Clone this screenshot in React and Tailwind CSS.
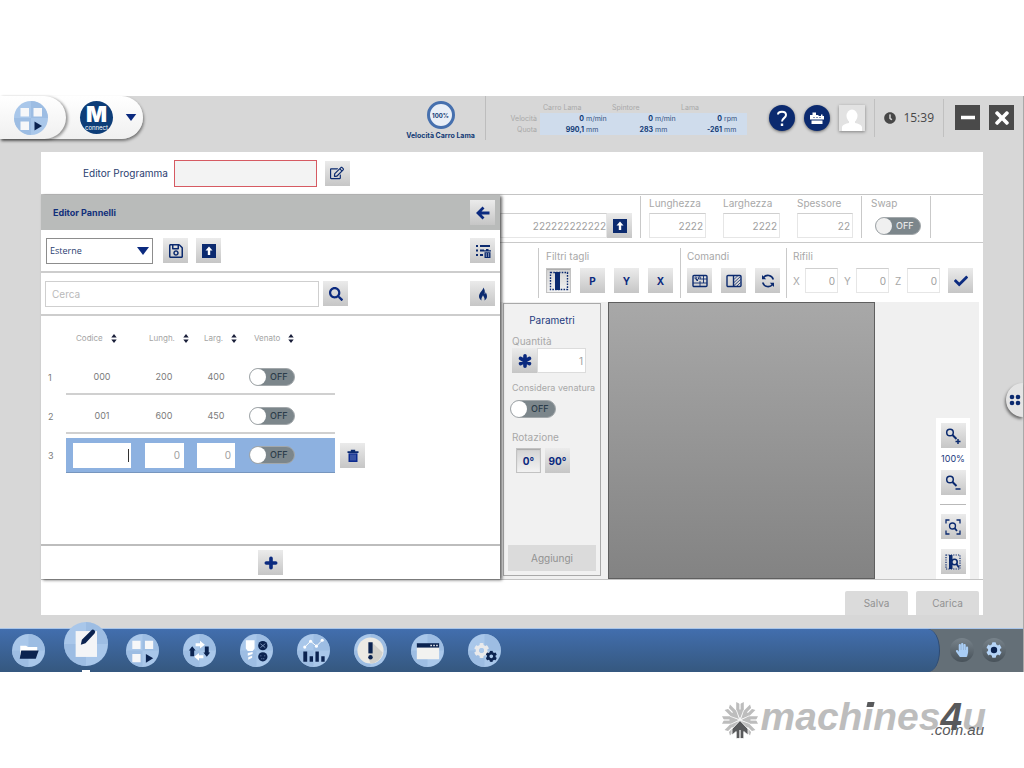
import { useState } from "react";
import {
  FaSearch,
  FaCheck,
  FaClock,
  FaRegEdit,
  FaRegSave,
  FaCog,
  FaTimes,
  FaHandPaper,
} from "react-icons/fa";

const NAVY = "#0b2a6f";

/* ---------- shared controls ---------- */

function IconButton({ label, pressed = false, children }) {
  return (
    <button
      type="button"
      aria-label={label}
      title={label}
      className={`flex size-[25px] shrink-0 items-center justify-center text-[10px] leading-none font-bold text-[#0b2a7f] ${
        pressed
          ? "border border-[#c2c2c2] bg-linear-to-b from-[#d4d4d4] to-[#f2f2f2] shadow-[inset_0_1px_1px_rgba(0,0,0,0.2)]"
          : "bg-linear-to-b from-[#ebebeb] to-[#c6c6c6]"
      }`}
    >
      {children}
    </button>
  );
}

function Toggle({ label, light = false }) {
  const [on, setOn] = useState(false);
  return (
    <label className="relative inline-flex h-[18px] w-[46px] cursor-pointer items-center rounded-full border border-[#a3a8ab] bg-[#7c868b]">
      <input
        type="checkbox"
        aria-label={label}
        checked={on}
        onChange={() => setOn(!on)}
        className="absolute inset-0 cursor-pointer opacity-0"
      />
      <span className={`flex w-full items-center gap-1 ${on ? "flex-row-reverse" : ""}`}>
        <span className={`size-4 rounded-full ${light ? "bg-[#f0f0f0]" : "bg-white"}`} />
        <span className={`text-[9px] leading-4 font-medium ${light ? "text-[#e8e8e8]" : "text-[#2b3c4a]"}`}>
          {on ? "ON" : "OFF"}
        </span>
      </span>
    </label>
  );
}

function Field({ label, value, className }) {
  return (
    <label className="flex flex-col gap-[3px] text-[10px] leading-[14px] text-[#a8a8a8]">
      <span>{label}</span>
      <input
        defaultValue={value}
        className={`h-[25px] border border-[#e6e6e6] border-t-[#cfcfcf] bg-white pr-0.5 text-right text-[10px] text-[#a0a0a0] outline-none ${className}`}
      />
    </label>
  );
}

function InlineField({ label, value }) {
  return (
    <label className="flex items-center gap-1 text-[10px] text-[#a8a8a8]">
      <span className="w-2">{label}</span>
      <input
        defaultValue={value}
        className="h-[25px] w-[33px] border border-[#e6e6e6] border-t-[#cfcfcf] bg-white pr-0.5 text-right text-[10px] text-[#a0a0a0] outline-none"
      />
    </label>
  );
}

function Divider() {
  return <span className="w-px shrink-0 self-stretch bg-[#c9c9c9]" />;
}

/* ---------- small glyphs ---------- */

const UploadGlyph = () => (
  <svg viewBox="0 0 16 16" className="size-4">
    <rect x="1" y="1" width="14" height="14" fill={NAVY} />
    <path d="M8 3.500 11.500 7.500H9.200V12H6.800V7.500H4.500Z" fill="#fff" />
  </svg>
);

const BackGlyph = () => (
  <svg viewBox="0 0 16 16" className="size-4" fill="none" stroke="#0b2a7f" strokeWidth="2.800">
    <path d="M8.500 2.500 3 8l5.500 5.500M3.500 8H14.500" />
  </svg>
);

const PlusGlyph = () => (
  <svg viewBox="0 0 14 14" className="size-3.5" fill="none" stroke="#0b2a7f" strokeWidth="3.600" strokeLinecap="round">
    <path d="M7 2.300v9.400M2.300 7h9.400" />
  </svg>
);

const AsteriskGlyph = () => (
  <svg viewBox="0 0 16 16" className="size-4" fill="none" stroke="#0b2a7f" strokeWidth="3.600" strokeLinecap="round">
    <path d="M8 2.800v10.400M3.500 5.400l9 5.200M12.500 5.400l-9 5.200" />
  </svg>
);

const ListTrashGlyph = () => (
  <svg viewBox="0 0 18 18" className="size-[18px]" fill={NAVY}>
    <path d="M2 3h2v2H2zM6 3h10v2H6zM2 7.500h2v2H2zM6 7.500h4v2H6zM2 12h2v2H2zM6 12h3v2H6z" />
    <path d="M10 8.200h2V7h2.500v1.200h2.500v1.400h-7zM10.500 10.300h6V16h-6z" />
    <path d="M12.300 11v4M14.600 11v4" stroke="#b9c0d0" strokeWidth=".7" />
  </svg>
);

const FlameGlyph = () => (
  <svg viewBox="0 0 16 16" className="size-4" fill={NAVY}>
    <path d="M8.200 1.500C8.400 4.300 4 6.500 4 10.200 4 12.300 5.100 13.700 6.600 14.400 5.800 12.200 7.300 11.200 8 9.300 8.700 11.200 10.200 12.200 9.400 14.400 11 13.700 12 12.300 12 10.300 12 8.500 11.300 7 10.600 6.200 10.600 7.200 10.300 7.900 9.600 8.300 10.100 5.800 9.900 3.200 8.200 1.500Z" />
  </svg>
);

const TrashGlyph = () => (
  <svg viewBox="0 0 14 16" className="h-4 w-3.5">
    <path d="M1.500 3.200H12.500V5H1.500ZM4.800 3.200V1.800h4.400v1.400" fill={NAVY} />
    <path d="M2.500 5.300H11.500V14H2.500Z" fill="#0b2a8f" />
    <path d="M5 6.500v6M7 6.500v6M9 6.500v6" stroke="#8ea0cc" strokeWidth=".7" />
  </svg>
);

const SortGlyph = () => (
  <svg viewBox="0 0 6 9" className="h-[9px] w-1.5 shrink-0" fill="#1a1f3a">
    <path d="M3 0 5.700 3.600H.3ZM3 9 .3 5.400H5.700Z" />
  </svg>
);

const CutGlyph = () => (
  <svg viewBox="0 0 20 20" className="size-5 shrink-0">
    <rect x="1.500" y="1.500" width="17" height="17" fill="none" stroke={NAVY} strokeWidth="1.400" strokeDasharray="1.600 1.200" />
    <path d="M6 1h5v18H6z" fill={NAVY} />
  </svg>
);

const GridPanelGlyph = () => (
  <svg viewBox="0 0 18 16" className="h-4 w-[18px]" fill="none" stroke={NAVY}>
    <rect x="2" y="2.500" width="14" height="11" rx="1" strokeWidth="1.400" />
    <path d="M2 10h14M9 8v5.500M12.500 3v7M9 6h7" strokeWidth=".9" />
    <path d="M4.500 5.500 7 8M8.500 4.500 5.500 8" strokeWidth="1" />
    <circle cx="8.500" cy="4.800" r="1.200" strokeWidth=".8" />
    <circle cx="4.800" cy="5" r="1" strokeWidth=".8" />
  </svg>
);

const SplitPanelGlyph = () => (
  <svg viewBox="0 0 18 16" className="h-4 w-[18px]" fill="none" stroke={NAVY}>
    <rect x="2" y="2.500" width="14" height="11" rx="1" strokeWidth="1.400" />
    <path d="M8.500 2.500v11" strokeWidth="1.400" />
    <path d="M9 6.500 12.500 3M9 9.500 15.500 3.500M9 12.500 15.500 6.500M12 13 15.500 9.500" strokeWidth=".8" />
  </svg>
);

const RefreshGlyph = () => (
  <svg viewBox="0 0 16 16" className="size-4" fill="none" stroke={NAVY} strokeWidth="1.600">
    <path d="M13.300 6.500A5.600 5.600 0 0 0 3.500 4.600M2.700 9.500a5.600 5.600 0 0 0 9.800 1.900" />
    <path d="M2 2v4.200h4.200ZM14 14V9.800H9.800Z" fill={NAVY} stroke="none" />
  </svg>
);

function ZoomGlyph({ plus }) {
  return (
    <svg viewBox="0 0 18 18" className="size-[18px]" fill="none" stroke={NAVY} strokeWidth="1.500">
      <circle cx="6" cy="5.500" r="3.300" />
      <path d="M8.500 8l4 4" strokeWidth="2" />
      <path d={plus ? "M11.500 14.500h5M14 12v5" : "M11.500 15h5"} />
    </svg>
  );
}

const ZoomFitGlyph = () => (
  <svg viewBox="0 0 18 18" className="size-[18px]" fill="none" stroke={NAVY} strokeWidth="1.300">
    <path d="M2 5.500V2h3.500M12.500 2H16v3.500M16 12.500V16h-3.500M5.500 16H2v-3.500" />
    <circle cx="8.500" cy="8" r="3" />
    <path d="M10.600 10.200 13 13" strokeWidth="1.800" />
  </svg>
);

const ZoomPanelGlyph = () => (
  <svg viewBox="0 0 18 18" className="size-[18px]" fill="none" stroke={NAVY}>
    <rect x="2" y="2" width="14" height="14" strokeWidth="1.200" strokeDasharray="1.200 1.200" />
    <path d="M5 2h3.500v14H5z" fill={NAVY} stroke="none" />
    <circle cx="10.500" cy="9" r="2.700" strokeWidth="1.600" fill="#dcdcdc" />
    <path d="M12.500 11 15 14.500" strokeWidth="1.800" />
  </svg>
);

const Caret = ({ className }) => (
  <svg viewBox="0 0 12 8" className={className} aria-hidden="true">
    <path d="M0 0h12L6 8Z" fill="#0b2a7f" />
  </svg>
);

/* ---------- round application icons ---------- */

function RoundIcon({ className, children }) {
  return (
    <svg viewBox="0 0 34 34" className={className} aria-hidden="true">
      <circle cx="17" cy="17" r="17" fill="#a9c7ea" />
      <path d="M17 0a17 17 0 0 1 17 17H17ZM17 34A17 17 0 0 1 0 17h17Z" fill="#98b9df" opacity=".7" />
      {children}
    </svg>
  );
}

const PanelsArt = () => (
  <>
    <path d="M6.500 7h8.500v8.500H6.500zM19.500 7H28v8.500h-8.500zM6.500 20.500H15V29H6.500z" fill="#f6f7f9" />
    <path d="M20.500 20.500 28 25l-7.500 4.500Z" fill="#0b2350" />
  </>
);

const dockItems = [
  {
    label: "File",
    draw: (
      <>
        <path d="M8.500 12h6l2 1.500h9.500V22H8.500Z" fill="#fff" />
        <path d="M9.500 17h18l-3 8.500H8Z" fill="#0b2350" />
      </>
    ),
  },
  {
    label: "Editor",
    active: true,
    draw: (
      <>
        <path d="M9 7h16.500v20H9z" fill="#f4f5f7" />
        <path d="M13 17.500 13.800 13.800 21 6.500a1.600 1.600 0 0 1 2.600 2.400L16.600 16.400Z" fill="#0b2350" />
      </>
    ),
  },
  { label: "Produzione", draw: <PanelsArt /> },
  {
    label: "Movimenti",
    draw: (
      <>
        <path d="M13 9.500h4.500V7L22.500 11l-5 4v-2.500H13ZM21 22h-4.500v-2.500l-5 4 5 4V25H21Z" fill="#fff" />
        <path d="M9.500 12.500l3.500 4.500H11.500v6H7.500v-6H6ZM24.500 23.500 21 19h1.500v-6h4v6H28Z" fill="#0b2350" />
      </>
    ),
  },
  {
    label: "Utensili",
    draw: (
      <>
        <path d="M6 6.500h9V15l-2 2.500H8L6 15ZM8 19.500l5-1v2l-5 2ZM8.500 24l4-1.500v2l-4 2Z" fill="#fff" />
        <circle cx="23.500" cy="12" r="4.800" fill="#0b2350" />
        <circle cx="23.500" cy="23.500" r="4.800" fill="#0b2350" />
        <path d="m21 10 5 4m0-4-5 4M21 22.500h1m3 0h1m-4 3h1m1 0h1" stroke="#8ca6cc" strokeWidth=".8" />
      </>
    ),
  },
  {
    label: "Statistiche",
    draw: (
      <>
        <path d="M6.500 18h4v10.500h-4zM13 23h3.500v5.500H13zM19 18h3.500v10.500H19zM25 23h3.500v5.500H25z" fill="#0b2350" />
        <path d="m8 13.500 6-6 6 5 6-6" fill="none" stroke="#fff" />
        <g fill="#fff">
          <circle cx="8" cy="13.500" r="1.600" />
          <circle cx="14" cy="7.500" r="1.600" />
          <circle cx="20" cy="12.500" r="1.600" />
          <circle cx="26" cy="6.500" r="1.600" />
        </g>
      </>
    ),
  },
  {
    label: "Allarmi",
    draw: (
      <>
        <circle cx="17" cy="17" r="13.500" fill="#eceae4" />
        <path d="m19 9 10.500 10a13.500 13.500 0 0 1-12.500 11.500L15 25Z" fill="#d3d1cb" />
        <path d="M14.800 8.500h4.400V20h-4.400z" fill="#0b2350" />
        <circle cx="17" cy="24" r="2.300" fill="#0b2350" />
      </>
    ),
  },
  {
    label: "Finestre",
    draw: (
      <>
        <path d="M6 10.500h23V26H6z" fill="#f2f2f0" />
        <path d="M6 9.500h23V14H6z" fill="#0b2350" />
        <path d="M20 11h1.500v1.500H20zM23 11h1.500v1.500H23zM26 11h1.500v1.500H26z" fill="#fff" />
      </>
    ),
  },
  {
    label: "Impostazioni",
    draw: (
      <>
        <FaCog x="6" y="9" size="16" color="#e9eaec" />
        <circle cx="14" cy="17" r="2.500" fill="#a9c7ea" />
        <FaCog x="18" y="17" size="12" color="#0b2350" />
      </>
    ),
  },
];

/* ---------- top bar ---------- */

const axes = [
  { name: "Carro Lama", speed: ["0", "m/min"], pos: ["990,1", "mm"] },
  { name: "Spintore", speed: ["0", "m/min"], pos: ["283", "mm"] },
  { name: "Lama", speed: ["0", "rpm"], pos: ["-261", "mm"] },
];

function AxisValue({ value, unit }) {
  return (
    <td className="bg-[#cfdcec] p-0">
      <span className="flex h-[11px] items-center gap-0.5 text-[#33507f]">
        <b className="w-11 text-right text-[#123a75]">{value}</b>
        <span>{unit}</span>
      </span>
    </td>
  );
}

function TopBar() {
  return (
    <header className="flex h-14 items-start">
      <div className="flex h-[43px] shrink-0 items-center rounded-r-full bg-linear-to-b from-white to-[#f0f0f0] pr-1.5 shadow-[1px_2px_3px_rgba(0,0,0,0.45)]">
        <button
          type="button"
          aria-label="Produzione"
          className="flex h-full w-[66px] items-center rounded-r-3xl pl-3.5 shadow-[2px_1px_3px_rgba(0,0,0,0.4)]"
        >
          <RoundIcon className="size-[34px]">
            <PanelsArt />
          </RoundIcon>
        </button>
        <button type="button" aria-label="M connect" className="flex items-center gap-3 pl-3.5">
          <span className="flex size-[33px] flex-col items-center justify-center rounded-full bg-[#0d3d78] text-white">
            <span className="text-[22px] leading-[19px] font-black">M</span>
            <span className="text-[6px] leading-[7px]">connect</span>
          </span>
          <Caret className="h-[7px] w-3" />
        </button>
      </div>

      <div className="flex flex-1 justify-end">
        <div className="flex w-[89px] flex-col items-center pt-[5px]">
          <span className="flex size-7 items-center justify-center rounded-full border-[3px] border-[#4670ae] bg-[#e9eff7] text-[6px] font-bold text-[#123a75]">
            100%
          </span>
          <span className="pt-px text-[7px] leading-3 font-bold whitespace-nowrap text-[#123a75]">
            Velocità Carro Lama
          </span>
        </div>
        <span className="h-11 w-px bg-[#bdbdbd]" />
        <table className="mt-1.5 ml-[22px] border-separate border-spacing-0 self-start text-[7px] leading-[11px]">
          <thead>
            <tr>
              <td className="w-8 p-0" />
              {axes.map((a) => (
                <th key={a.name} scope="col" className="w-[69px] p-0 pl-[3px] text-left font-normal text-[#a9a9a9]">
                  {a.name}
                </th>
              ))}
            </tr>
          </thead>
          <tbody>
            <tr>
              <th scope="row" className="p-0 pr-[3px] text-right font-normal text-[#a9a9a9]">Velocità</th>
              {axes.map((a) => (
                <AxisValue key={a.name} value={a.speed[0]} unit={a.speed[1]} />
              ))}
            </tr>
            <tr>
              <th scope="row" className="p-0 pr-[3px] text-right font-normal text-[#a9a9a9]">Quota</th>
              {axes.map((a) => (
                <AxisValue key={a.name} value={a.pos[0]} unit={a.pos[1]} />
              ))}
            </tr>
          </tbody>
        </table>
      </div>

      <div className="ml-[22px] flex h-[43px] shrink-0 items-center gap-[9px] pr-[9px]">
        <button
          type="button"
          aria-label="Aiuto"
          className="flex size-[26px] items-center justify-center rounded-full bg-[#0b2a6f] shadow-[0_1px_3px_rgba(0,0,0,0.5)]"
        >
          <svg viewBox="0 0 26 26" className="size-[26px]" fill="none" stroke="#fff" strokeWidth="2">
            <path d="M9 9.500C9 6 17 5.500 17 10c0 3-4 3.300-4 6.500" />
            <path d="M13 18.500V21" strokeWidth="2.400" />
          </svg>
        </button>
        <button
          type="button"
          aria-label="Macchina"
          className="flex size-[26px] items-center justify-center rounded-full bg-[#0b2a6f] shadow-[0_1px_3px_rgba(0,0,0,0.5)]"
        >
          <svg viewBox="0 0 26 26" className="size-[26px]" fill="#fff">
            <path d="M8.500 7.500H12V10h2.500v1H17V9.500h1.500V11H20v3.500H6V10h2.500Z" />
            <path d="M7.500 15.500h11v3.500h-11z" />
            <path d="M9.500 12.500h1m2 0h1m2 0h1" stroke="#0b2a6f" />
          </svg>
        </button>
        <button
          type="button"
          aria-label="Utente"
          className="flex size-[26px] items-end justify-center bg-[#e2e2e2] shadow-[0_1px_3px_rgba(0,0,0,0.4)]"
        >
          <svg viewBox="0 0 26 26" className="size-[26px]" fill="#fff">
            <ellipse cx="13" cy="11" rx="5.500" ry="6.500" />
            <path d="M3 26v-3.500c0-2.500 4-4 7-4.500v-3h6v3c3 .5 7 2 7 4.500V26Z" />
          </svg>
        </button>
        <span className="h-[38px] w-px bg-[#c0c0c0]" />
        <span className="flex w-[50px] items-center justify-between gap-1.5 font-['Open_Sans','Noto_Sans',sans-serif] text-[12px] text-[#474747]">
          <FaClock className="size-3 shrink-0" />
          15:39
        </span>
        <span className="h-[38px] w-px bg-[#c0c0c0]" />
        <button type="button" aria-label="Riduci" className="ml-0.5 flex size-[25px] items-center justify-center bg-[#4a4a4a]">
          <svg viewBox="0 0 25 25" className="size-[25px]">
            <path d="M6 12.500h14" stroke="#fff" strokeWidth="3.500" />
          </svg>
        </button>
        <button type="button" aria-label="Chiudi" className="flex size-[25px] items-center justify-center bg-[#4a4a4a] text-white">
          <FaTimes className="size-5" />
        </button>
      </div>
    </header>
  );
}

/* ---------- left: panel list ---------- */

const columns = [
  { name: "Codice", cls: "w-[72px] pl-2.5" },
  { name: "Lungh.", cls: "w-[52px] pl-[11px]" },
  { name: "Larg.", cls: "w-[52px] pl-3.5" },
  { name: "Venato", cls: "w-[93px] pl-3" },
];

const panels = [
  { id: 1, code: "000", len: "200", wid: "400" },
  { id: 2, code: "001", len: "600", wid: "450" },
];

function PanelEditor() {
  const cell = "border-b-2 border-[#d0d0d0] p-0 text-center";
  const editing = "border-b border-[#7796be] bg-[#8db1e0] p-0";
  const box = "h-[25px] bg-white pr-1 text-right text-[10px] text-[#a0a0a0] outline-none";
  return (
    <section className="z-10 flex w-[459px] shrink-0 flex-col bg-white shadow-[2px_1px_3px_rgba(0,0,0,0.6)]">
      <div className="flex h-[35px] items-center justify-between bg-[#b9bbba] pr-[5px] pl-3">
        <h2 className="text-[9px] font-bold text-[#12307a]">Editor Pannelli</h2>
        <IconButton label="Indietro">
          <BackGlyph />
        </IconButton>
      </div>

      <div className="flex h-[43px] items-center gap-2 border-b-2 border-[#cdcdcd] px-[5px]">
        <div className="relative mr-0.5">
          <select
            aria-label="Origine pannelli"
            className="block h-[26px] w-[107px] appearance-none border border-[#8d8d8d] bg-white pl-[3px] font-['Open_Sans','Noto_Sans',sans-serif] text-[9px] text-[#2b4070] outline-none"
          >
            <option>Esterne</option>
            <option>Interne</option>
          </select>
          <Caret className="pointer-events-none absolute top-[9px] right-1 h-2 w-3" />
        </div>
        <IconButton label="Salva elenco">
          <FaRegSave className="size-4 text-[#0b2a6f]" />
        </IconButton>
        <IconButton label="Carica elenco">
          <UploadGlyph />
        </IconButton>
        <div className="ml-auto">
          <IconButton label="Svuota elenco">
            <ListTrashGlyph />
          </IconButton>
        </div>
      </div>

      <div className="flex h-[43px] items-center gap-1 border-b-2 border-[#cdcdcd] pr-[5px] pl-1">
        <input
          type="search"
          aria-label="Cerca"
          placeholder="Cerca"
          className="h-[26px] w-[274px] border border-[#cfcfcf] bg-white px-1.5 text-[10px] text-[#555] outline-none placeholder:text-[#b9b9b9]"
        />
        <IconButton label="Avvia ricerca">
          <FaSearch className="size-3.5" />
        </IconButton>
        <div className="ml-auto">
          <IconButton label="Recenti">
            <FlameGlyph />
          </IconButton>
        </div>
      </div>

      <div className="flex-1 pt-1">
        <table className="border-separate border-spacing-x-0 border-spacing-y-1 text-[9px] text-[#7b7b7b]">
          <thead>
            <tr className="h-8">
              <td className="w-[25px] p-0" />
              {columns.map((c) => (
                <th
                  key={c.name}
                  scope="col"
                  className={`p-0 text-left align-top text-[8px] font-normal text-[#a4a4a4] ${c.cls}`}
                >
                  <span className="flex h-7 items-center gap-2">
                    {c.name}
                    <SortGlyph />
                  </span>
                </th>
              ))}
              <td className="p-0" />
            </tr>
          </thead>
          <tbody>
            {panels.map((p) => (
              <tr key={p.id} className="h-[35px]">
                <th scope="row" className="p-0 pl-[7px] text-left font-normal">{p.id}</th>
                <td className={cell}>{p.code}</td>
                <td className={cell}>{p.len}</td>
                <td className={cell}>{p.wid}</td>
                <td className={`${cell} pl-[7px]`}>
                  <span className="flex">
                    <Toggle label={`Venato ${p.id}`} />
                  </span>
                </td>
                <td className="p-0" />
              </tr>
            ))}
            <tr className="h-[35px]">
              <th scope="row" className="p-0 pl-[7px] text-left font-normal">3</th>
              <td className={editing}>
                <span className="relative ml-[7px] flex w-[58px]">
                  <input aria-label="Codice 3" className={`w-[58px] ${box}`} />
                  <span className="absolute top-1.5 right-0.5 h-[13px] w-px bg-[#333]" />
                </span>
              </td>
              <td className={editing}>
                <input aria-label="Lunghezza 3" defaultValue="0" className={`ml-[7px] block w-[39px] ${box}`} />
              </td>
              <td className={editing}>
                <input aria-label="Larghezza 3" defaultValue="0" className={`ml-[7px] block w-[38px] ${box}`} />
              </td>
              <td className={`${editing} pl-[7px]`}>
                <span className="flex">
                  <Toggle label="Venato 3" />
                </span>
              </td>
              <td className="p-0 pl-[5px]">
                <IconButton label="Elimina">
                  <TrashGlyph />
                </IconButton>
              </td>
            </tr>
          </tbody>
        </table>
      </div>

      <div className="flex h-[35px] items-center justify-center border-t-2 border-[#bdbdbd]">
        <IconButton label="Aggiungi pannello">
          <PlusGlyph />
        </IconButton>
      </div>
    </section>
  );
}

/* ---------- right: sheet workspace ---------- */

function Workspace() {
  return (
    <section className="flex min-w-0 flex-1 flex-col">
      <div className="flex border-b border-[#c9c9c9] pt-px pb-1">
        <div className="flex items-end">
          <input
            aria-label="Codice pannello"
            defaultValue="222222222222"
            className="h-[25px] w-[107px] border border-[#e6e6e6] border-t-[#cfcfcf] text-right text-[10px] text-[#a0a0a0] outline-none"
          />
          <IconButton label="Carica pannello">
            <UploadGlyph />
          </IconButton>
        </div>
        <div className="ml-2 flex gap-[17px] border-l border-[#c9c9c9] px-2">
          <Field label="Lunghezza" value="2222" className="w-[57px]" />
          <Field label="Larghezza" value="2222" className="w-[57px]" />
          <Field label="Spessore" value="22" className="w-[56px]" />
        </div>
        <div className="flex flex-col gap-[7px] border-x border-[#c9c9c9] px-[9px] text-[10px] leading-[14px] text-[#a8a8a8]">
          <span>Swap</span>
          <span className="flex pl-1">
            <Toggle label="Swap" light />
          </span>
        </div>
      </div>

      <div className="flex pt-[5px] pb-1 pl-[38px] text-[10px] leading-4 text-[#a8a8a8]">
        <Divider />
        <div className="flex flex-col gap-1 px-[7px] pb-[5px]">
          <span>Filtri tagli</span>
          <div className="flex gap-[9px]">
            <IconButton label="Tutti i tagli" pressed>
              <CutGlyph />
            </IconButton>
            <IconButton label="Tagli P">P</IconButton>
            <IconButton label="Tagli Y">Y</IconButton>
            <IconButton label="Tagli X">X</IconButton>
          </div>
        </div>
        <Divider />
        <div className="flex flex-col gap-1 px-1.5 pb-[5px]">
          <span>Comandi</span>
          <div className="flex gap-[9px]">
            <IconButton label="Disposizione">
              <GridPanelGlyph />
            </IconButton>
            <IconButton label="Dividi">
              <SplitPanelGlyph />
            </IconButton>
            <IconButton label="Aggiorna">
              <RefreshGlyph />
            </IconButton>
          </div>
        </div>
        <Divider />
        <div className="flex flex-col gap-1 pb-[5px] pl-1.5">
          <span>Rifili</span>
          <div className="flex gap-1.5">
            <InlineField label="X" value="0" />
            <InlineField label="Y" value="0" />
            <InlineField label="Z" value="0" />
            <span className="flex pl-0.5">
              <IconButton label="Conferma rifili">
                <FaCheck className="size-3.5" />
              </IconButton>
            </span>
          </div>
        </div>
      </div>

      <div className="mr-1 flex flex-1 bg-[#f0f0f0] pl-[3px]">
        <div className="mt-px mb-[3px] flex w-[98px] shrink-0 flex-col border border-[#a9a9a9] bg-[#f1f1f1] px-1 pt-[9px] pb-1 text-[10px] leading-[14px] text-[#a8a8a8]">
          <h3 className="text-center text-[#1c3a7e]">Parametri</h3>
          <label htmlFor="qty" className="pt-[7px] pl-1">Quantità</label>
          <div className="flex pl-1">
            <IconButton label="Quantità illimitata">
              <AsteriskGlyph />
            </IconButton>
            <input
              id="qty"
              defaultValue="1"
              className="h-[25px] w-[49px] border border-[#dcdcdc] bg-white pr-0.5 text-right text-[10px] text-[#a0a0a0] outline-none"
            />
          </div>
          <span className="pt-2 pl-1 text-[9px] whitespace-nowrap">Considera venatura</span>
          <span className="flex pt-[5px] pl-0.5">
            <Toggle label="Considera venatura" />
          </span>
          <span className="pt-3 pl-1">Rotazione</span>
          <div className="flex gap-1 pt-1 pl-2">
            <IconButton label="0 gradi" pressed>0°</IconButton>
            <IconButton label="90 gradi">90°</IconButton>
          </div>
          <button type="button" className="mt-auto h-[26px] bg-[#dbdbdb] text-[10px] text-[#929292]">
            Aggiungi
          </button>
        </div>
        <div className="ml-[7px] flex-1 border border-[#5f5f5f] bg-linear-to-b from-[#a8a8a8] to-[#838383]" />
        <div className="flex w-[104px] shrink-0 items-end justify-end pr-[9px]">
          <div className="flex w-[34px] flex-col items-center bg-white py-[5px]">
            <IconButton label="Ingrandisci">
              <ZoomGlyph plus />
            </IconButton>
            <span className="py-[3px] text-[9px] leading-4 text-[#1c3a7e]">100%</span>
            <IconButton label="Riduci zoom">
              <ZoomGlyph />
            </IconButton>
            <span className="my-[9px] h-px w-[26px] bg-[#b9b9b9]" />
            <IconButton label="Adatta alla finestra">
              <ZoomFitGlyph />
            </IconButton>
            <span className="h-2.5" />
            <IconButton label="Adatta al pannello">
              <ZoomPanelGlyph />
            </IconButton>
          </div>
        </div>
      </div>
    </section>
  );
}

/* ---------- bottom dock ---------- */

function Dock() {
  return (
    <nav className="flex h-11 border-t border-[#a9c5e9] bg-[#646f77]">
      <div className="flex flex-1 items-stretch rounded-r-[12px_50%] border-r border-[#2c4a74] bg-linear-to-b from-[#426eae] to-[#35587f]">
        {dockItems.map((d) => (
          <a
            key={d.label}
            href={`#${d.label.toLowerCase()}`}
            aria-label={d.label}
            className={`flex w-[57px] shrink-0 flex-col items-center ${
              d.active ? "-mt-[7px] justify-between" : "justify-center pb-px"
            }`}
          >
            <RoundIcon className={d.active ? "size-[44px]" : "size-[33px]"}>{d.draw}</RoundIcon>
            {d.active && <span className="h-0.5 w-2 bg-white" />}
          </a>
        ))}
      </div>
      <div className="flex w-[83px] shrink-0 items-center gap-2 pb-px pl-2.5">
        <button
          type="button"
          aria-label="Manuale"
          className="flex size-6 items-center justify-center rounded-full bg-linear-to-b from-[#78838b] to-[#48525a]"
        >
          <FaHandPaper className="size-3.5 text-[#a9cdf5]" />
        </button>
        <button
          type="button"
          aria-label="Configurazione"
          className="flex size-6 items-center justify-center rounded-full bg-linear-to-b from-[#78838b] to-[#48525a]"
        >
          <svg viewBox="0 0 16 16" className="size-4" aria-hidden="true">
            <FaCog size="16" color="#b5d4f7" />
            <circle cx="8" cy="8" r="3.200" fill="#0b2350" />
          </svg>
        </button>
      </div>
    </nav>
  );
}

/* ---------- watermark ---------- */

function Spokes() {
  return (
    <svg viewBox="0 0 38 38" className="size-[38px] shrink-0" aria-hidden="true">
      {[0, 45, 90, 135, 225, 270, 315].map((a) => (
        <g key={a} transform={`rotate(${a} 19 19)`}>
          <path d="M15.200 1V10.500L19 18.500 22.800 10.500V1L19 3Z" fill="#bdbdbd" />
          <path d="M19 1V8.500" stroke="#fff" strokeWidth="1.200" />
          <path d="M14.600 9.500 19 18.500 23.400 9.500" fill="none" stroke="#fff" strokeWidth=".7" />
        </g>
      ))}
      <path d="M19 19.500 27 28V34L22.800 30.500V37.500H15.200V30.500L11 34V28Z" fill="#58595b" stroke="#fff" strokeWidth=".8" />
      <path d="M19 29V38" stroke="#fff" strokeWidth="1.200" />
    </svg>
  );
}

export default function App() {
  return (
    <div className="flex min-h-screen flex-col bg-white font-[Inter,'Noto_Sans',sans-serif]">
      <main className="relative mt-24 flex flex-col border-r border-[#a9a9a9] bg-[#d7d7d7]">
        <TopBar />
        <div className="mr-10 mb-[13px] ml-[41px] flex flex-col bg-white">
          <div className="flex h-[43px] items-center border-b border-[#c4c4c4] pl-[42px]">
            <label htmlFor="program" className="text-[10px] text-[#2b4070]">
              Editor Programma
            </label>
            <input
              id="program"
              className="mr-2 ml-1.5 h-[27px] w-[143px] border border-[#d65a62] bg-[#f3f3f3] px-1 text-[10px] outline-none"
            />
            <IconButton label="Modifica nome">
              <FaRegEdit className="size-3.5 text-[#0b2a6f]" />
            </IconButton>
          </div>
          <div className="flex min-h-[385px] border-b border-[#c4c4c4]">
            <PanelEditor />
            <Workspace />
          </div>
          <div className="flex justify-end gap-2 pt-[11px] pr-1 text-[10px] text-[#929292]">
            <button type="button" className="h-6 w-[63px] rounded-t-xs bg-[#dbdbdb]">Salva</button>
            <button type="button" className="h-6 w-[63px] rounded-t-xs bg-[#dbdbdb]">Carica</button>
          </div>
        </div>
        <Dock />
        <button
          type="button"
          aria-label="Apri menu laterale"
          className="absolute top-[287px] right-0 flex h-[34px] w-[17px] items-center justify-center rounded-l-full bg-[#e4e4e4] shadow-[-1px_2px_3px_rgba(0,0,0,0.5)]"
        >
          <svg viewBox="0 0 12 12" className="size-3" fill={NAVY}>
            <circle cx="3" cy="3" r="2.300" />
            <circle cx="9" cy="3" r="2.300" />
            <circle cx="3" cy="9" r="2.300" />
            <circle cx="9" cy="9" r="2.300" />
          </svg>
        </button>
      </main>
      <footer className="flex justify-end pt-[29px] pr-[38px]">
        <a
          href="#machines4u"
          aria-label="machines4u.com.au"
          className="relative flex items-center gap-0.5 font-['Liberation_Sans',Arial,sans-serif] italic"
        >
          <Spokes />
          <span className="pb-1.5 text-[39px] leading-8 font-bold text-[#bdbdbd]">
            mach
            <span className="relative">
              i
              <span className="absolute top-[7px] left-[5px] h-[5px] w-[7px] -skew-x-12 bg-[#58595b]" />
            </span>
            nes<span className="text-[#58595b]">4</span>u
          </span>
          <span className="absolute right-0.5 bottom-px text-[15px] leading-4 text-[#58595b]">.com.au</span>
        </a>
      </footer>
    </div>
  );
}
